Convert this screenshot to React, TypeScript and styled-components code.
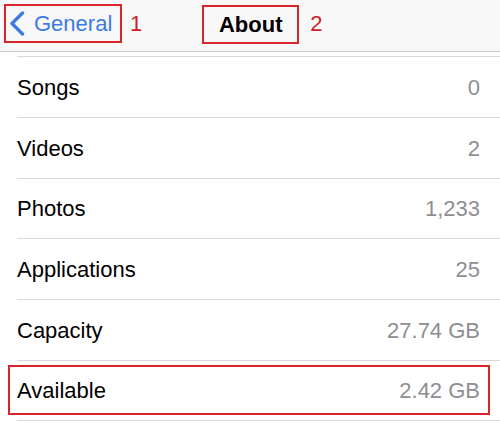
import React from "react";
import styled, { createGlobalStyle } from "styled-components";

const GlobalStyle = createGlobalStyle`
  html, body {
    margin: 0;
    padding: 0;
    background: #ffffff;
    font-family: "Liberation Sans", Arial, sans-serif;
  }
`;

const Screen = styled.div`
  width: 500px;
  height: 423px;
  overflow: hidden;
  background: #ffffff;
`;

const NavBar = styled.div`
  display: flex;
  align-items: flex-start;
  height: 52px;
  padding: 4px 0 0 4px;
  box-sizing: border-box;
  background: #f8f8f8;
  border-bottom: 1px solid #c9c9cc;
`;

const Marked = styled.div<{ $width: number }>`
  display: flex;
  align-items: center;
  box-sizing: border-box;
  width: ${(p) => p.$width}px;
  height: 39px;
  border: 2px solid #d9242b;
`;

const BackButton = styled(Marked)`
  padding-left: 2px;
  gap: 9px;
  color: #3b7be2;
  font-size: 22px;
`;

const TitleBox = styled(Marked)`
  justify-content: center;
  margin-top: 1px;
  margin-left: 60px;
  font-size: 22px;
  font-weight: 700;
  color: #000000;
`;

const Tag = styled.span<{ $gap: number }>`
  margin-left: ${(p) => p.$gap}px;
  line-height: 39px;
  font-size: 22px;
  color: #c9232b;
`;

const List = styled.div`
  padding-top: 4px;
`;

const Row = styled.div`
  position: relative;
  padding-left: 17px;
`;

const RowInner = styled.div<{ $last?: boolean }>`
  display: flex;
  align-items: center;
  justify-content: space-between;
  box-sizing: border-box;
  height: 60.8px;
  padding: 2px 20px 0 0;
  border-top: 1px solid #d9d9dc;
  border-bottom: ${(p) => (p.$last ? "1px solid #d9d9dc" : "none")};
  font-size: 22px;
`;

const Label = styled.span`
  color: #000000;
`;

const Value = styled.span`
  color: #8e8e93;
`;

const RowMark = styled.div`
  position: absolute;
  top: 5px;
  left: 8px;
  right: 10px;
  bottom: 6px;
  border: 2px solid #d9242b;
  pointer-events: none;
`;

const Chevron = () => (
  <svg width="17" height="25" viewBox="0 0 17 25" fill="none">
    <path
      d="M14.5 2 L4 12.5 L14.5 23"
      stroke="#3b7be2"
      strokeWidth="3.4"
      strokeLinecap="round"
      strokeLinejoin="round"
    />
  </svg>
);

const rows = [
  { label: "Songs", value: "0" },
  { label: "Videos", value: "2" },
  { label: "Photos", value: "1,233" },
  { label: "Applications", value: "25" },
  { label: "Capacity", value: "27.74 GB" },
  { label: "Available", value: "2.42 GB", marked: true },
];

export default function App() {
  return (
    <Screen>
      <GlobalStyle />
      <NavBar>
        <BackButton $width={118}>
          <Chevron />
          <span>General</span>
        </BackButton>
        <Tag $gap={8}>1</Tag>
        <TitleBox $width={97}>About</TitleBox>
        <Tag $gap={11}>2</Tag>
      </NavBar>
      <List>
        {rows.map((row, i) => (
          <Row key={row.label}>
            <RowInner $last={i === rows.length - 1}>
              <Label>{row.label}</Label>
              <Value>{row.value}</Value>
            </RowInner>
            {row.marked && <RowMark />}
          </Row>
        ))}
      </List>
    </Screen>
  );
}
